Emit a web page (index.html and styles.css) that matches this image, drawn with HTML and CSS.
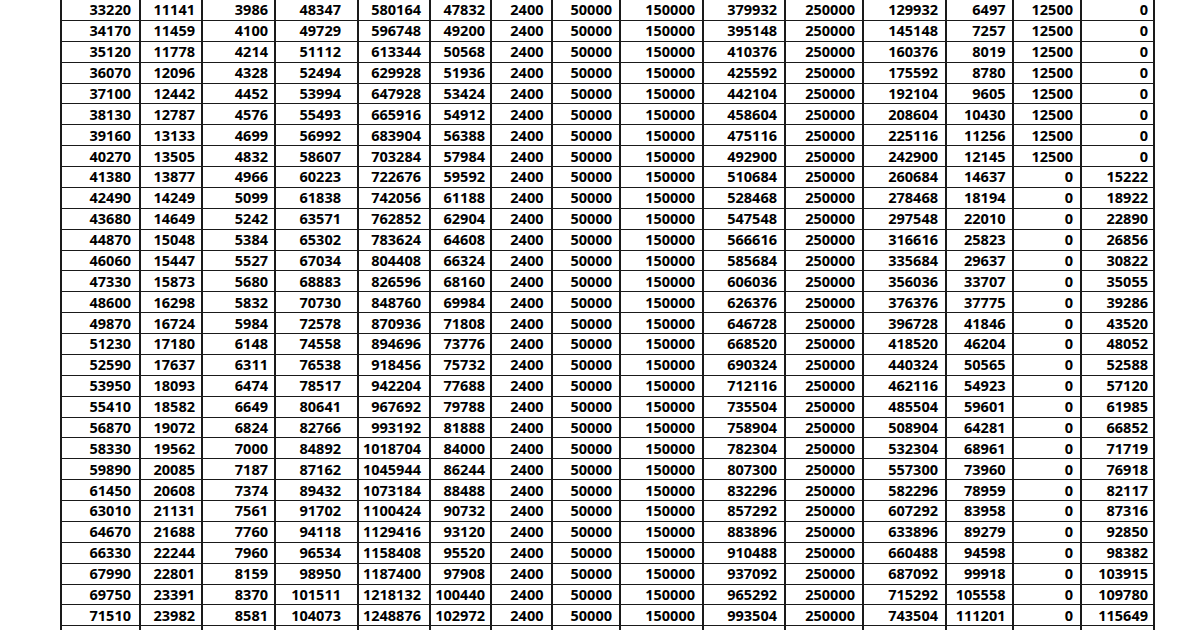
FILE: index.html
```html
<!DOCTYPE html>
<html>
<head>
<meta charset="utf-8">
<link rel="stylesheet" href="styles.css">
</head>
<body>
<table class="sheet">
<colgroup>
<col class="w1"><col class="w2"><col class="w3"><col class="w4"><col class="w5"><col class="w6"><col class="w7"><col class="w8"><col class="w9"><col class="w10"><col class="w11"><col class="w12"><col class="w13"><col class="w14"><col class="w15">
</colgroup>
<tbody>
<tr><td>33220</td><td>11141</td><td>3986</td><td>48347</td><td>580164</td><td>47832</td><td>2400</td><td>50000</td><td>150000</td><td>379932</td><td>250000</td><td>129932</td><td>6497</td><td>12500</td><td>0</td></tr>
<tr><td>34170</td><td>11459</td><td>4100</td><td>49729</td><td>596748</td><td>49200</td><td>2400</td><td>50000</td><td>150000</td><td>395148</td><td>250000</td><td>145148</td><td>7257</td><td>12500</td><td>0</td></tr>
<tr><td>35120</td><td>11778</td><td>4214</td><td>51112</td><td>613344</td><td>50568</td><td>2400</td><td>50000</td><td>150000</td><td>410376</td><td>250000</td><td>160376</td><td>8019</td><td>12500</td><td>0</td></tr>
<tr><td>36070</td><td>12096</td><td>4328</td><td>52494</td><td>629928</td><td>51936</td><td>2400</td><td>50000</td><td>150000</td><td>425592</td><td>250000</td><td>175592</td><td>8780</td><td>12500</td><td>0</td></tr>
<tr><td>37100</td><td>12442</td><td>4452</td><td>53994</td><td>647928</td><td>53424</td><td>2400</td><td>50000</td><td>150000</td><td>442104</td><td>250000</td><td>192104</td><td>9605</td><td>12500</td><td>0</td></tr>
<tr><td>38130</td><td>12787</td><td>4576</td><td>55493</td><td>665916</td><td>54912</td><td>2400</td><td>50000</td><td>150000</td><td>458604</td><td>250000</td><td>208604</td><td>10430</td><td>12500</td><td>0</td></tr>
<tr><td>39160</td><td>13133</td><td>4699</td><td>56992</td><td>683904</td><td>56388</td><td>2400</td><td>50000</td><td>150000</td><td>475116</td><td>250000</td><td>225116</td><td>11256</td><td>12500</td><td>0</td></tr>
<tr><td>40270</td><td>13505</td><td>4832</td><td>58607</td><td>703284</td><td>57984</td><td>2400</td><td>50000</td><td>150000</td><td>492900</td><td>250000</td><td>242900</td><td>12145</td><td>12500</td><td>0</td></tr>
<tr><td>41380</td><td>13877</td><td>4966</td><td>60223</td><td>722676</td><td>59592</td><td>2400</td><td>50000</td><td>150000</td><td>510684</td><td>250000</td><td>260684</td><td>14637</td><td>0</td><td>15222</td></tr>
<tr><td>42490</td><td>14249</td><td>5099</td><td>61838</td><td>742056</td><td>61188</td><td>2400</td><td>50000</td><td>150000</td><td>528468</td><td>250000</td><td>278468</td><td>18194</td><td>0</td><td>18922</td></tr>
<tr><td>43680</td><td>14649</td><td>5242</td><td>63571</td><td>762852</td><td>62904</td><td>2400</td><td>50000</td><td>150000</td><td>547548</td><td>250000</td><td>297548</td><td>22010</td><td>0</td><td>22890</td></tr>
<tr><td>44870</td><td>15048</td><td>5384</td><td>65302</td><td>783624</td><td>64608</td><td>2400</td><td>50000</td><td>150000</td><td>566616</td><td>250000</td><td>316616</td><td>25823</td><td>0</td><td>26856</td></tr>
<tr><td>46060</td><td>15447</td><td>5527</td><td>67034</td><td>804408</td><td>66324</td><td>2400</td><td>50000</td><td>150000</td><td>585684</td><td>250000</td><td>335684</td><td>29637</td><td>0</td><td>30822</td></tr>
<tr><td>47330</td><td>15873</td><td>5680</td><td>68883</td><td>826596</td><td>68160</td><td>2400</td><td>50000</td><td>150000</td><td>606036</td><td>250000</td><td>356036</td><td>33707</td><td>0</td><td>35055</td></tr>
<tr><td>48600</td><td>16298</td><td>5832</td><td>70730</td><td>848760</td><td>69984</td><td>2400</td><td>50000</td><td>150000</td><td>626376</td><td>250000</td><td>376376</td><td>37775</td><td>0</td><td>39286</td></tr>
<tr><td>49870</td><td>16724</td><td>5984</td><td>72578</td><td>870936</td><td>71808</td><td>2400</td><td>50000</td><td>150000</td><td>646728</td><td>250000</td><td>396728</td><td>41846</td><td>0</td><td>43520</td></tr>
<tr><td>51230</td><td>17180</td><td>6148</td><td>74558</td><td>894696</td><td>73776</td><td>2400</td><td>50000</td><td>150000</td><td>668520</td><td>250000</td><td>418520</td><td>46204</td><td>0</td><td>48052</td></tr>
<tr><td>52590</td><td>17637</td><td>6311</td><td>76538</td><td>918456</td><td>75732</td><td>2400</td><td>50000</td><td>150000</td><td>690324</td><td>250000</td><td>440324</td><td>50565</td><td>0</td><td>52588</td></tr>
<tr><td>53950</td><td>18093</td><td>6474</td><td>78517</td><td>942204</td><td>77688</td><td>2400</td><td>50000</td><td>150000</td><td>712116</td><td>250000</td><td>462116</td><td>54923</td><td>0</td><td>57120</td></tr>
<tr><td>55410</td><td>18582</td><td>6649</td><td>80641</td><td>967692</td><td>79788</td><td>2400</td><td>50000</td><td>150000</td><td>735504</td><td>250000</td><td>485504</td><td>59601</td><td>0</td><td>61985</td></tr>
<tr><td>56870</td><td>19072</td><td>6824</td><td>82766</td><td>993192</td><td>81888</td><td>2400</td><td>50000</td><td>150000</td><td>758904</td><td>250000</td><td>508904</td><td>64281</td><td>0</td><td>66852</td></tr>
<tr><td>58330</td><td>19562</td><td>7000</td><td>84892</td><td>1018704</td><td>84000</td><td>2400</td><td>50000</td><td>150000</td><td>782304</td><td>250000</td><td>532304</td><td>68961</td><td>0</td><td>71719</td></tr>
<tr><td>59890</td><td>20085</td><td>7187</td><td>87162</td><td>1045944</td><td>86244</td><td>2400</td><td>50000</td><td>150000</td><td>807300</td><td>250000</td><td>557300</td><td>73960</td><td>0</td><td>76918</td></tr>
<tr><td>61450</td><td>20608</td><td>7374</td><td>89432</td><td>1073184</td><td>88488</td><td>2400</td><td>50000</td><td>150000</td><td>832296</td><td>250000</td><td>582296</td><td>78959</td><td>0</td><td>82117</td></tr>
<tr><td>63010</td><td>21131</td><td>7561</td><td>91702</td><td>1100424</td><td>90732</td><td>2400</td><td>50000</td><td>150000</td><td>857292</td><td>250000</td><td>607292</td><td>83958</td><td>0</td><td>87316</td></tr>
<tr><td>64670</td><td>21688</td><td>7760</td><td>94118</td><td>1129416</td><td>93120</td><td>2400</td><td>50000</td><td>150000</td><td>883896</td><td>250000</td><td>633896</td><td>89279</td><td>0</td><td>92850</td></tr>
<tr><td>66330</td><td>22244</td><td>7960</td><td>96534</td><td>1158408</td><td>95520</td><td>2400</td><td>50000</td><td>150000</td><td>910488</td><td>250000</td><td>660488</td><td>94598</td><td>0</td><td>98382</td></tr>
<tr><td>67990</td><td>22801</td><td>8159</td><td>98950</td><td>1187400</td><td>97908</td><td>2400</td><td>50000</td><td>150000</td><td>937092</td><td>250000</td><td>687092</td><td>99918</td><td>0</td><td>103915</td></tr>
<tr><td>69750</td><td>23391</td><td>8370</td><td>101511</td><td>1218132</td><td>100440</td><td>2400</td><td>50000</td><td>150000</td><td>965292</td><td>250000</td><td>715292</td><td>105558</td><td>0</td><td>109780</td></tr>
<tr><td>71510</td><td>23982</td><td>8581</td><td>104073</td><td>1248876</td><td>102972</td><td>2400</td><td>50000</td><td>150000</td><td>993504</td><td>250000</td><td>743504</td><td>111201</td><td>0</td><td>115649</td></tr>
<tr><td></td><td></td><td></td><td></td><td></td><td></td><td></td><td></td><td></td><td></td><td></td><td></td><td></td><td></td><td></td></tr>
</tbody>
</table>
</body>
</html>
```

FILE: styles.css
```css
html, body {
  margin: 0;
  padding: 0;
  background: #ffffff;
  overflow: hidden;
}

.sheet {
  border-collapse: collapse;
  table-layout: fixed;
  width: 1095px;
  margin: -1px 0 0 59.7px;
  font-family: "Open Sans", "Liberation Sans", sans-serif;
  font-weight: 700;
  font-size: 14.5px;
  color: #000;
}

.w1 { width: 79.3px; }
.w2 { width: 62px; }
.w3 { width: 73.5px; }
.w4 { width: 82.5px; }
.w5 { width: 72px; }
.w6 { width: 61px; }
.w7 { width: 61px; }
.w8 { width: 68px; }
.w9 { width: 83px; }
.w10 { width: 82px; }
.w11 { width: 78px; }
.w12 { width: 83px; }
.w13 { width: 67px; }
.w14 { width: 68px; }
.w15 { width: 73px; }

.sheet tr {
  height: 20.88px;
}

.sheet td {
  border-left: 2px solid #1a1a1a;
  border-right: 2px solid #1a1a1a;
  border-top: 1px solid #1a1a1a;
  border-bottom: 1px solid #1a1a1a;
  padding: 1px 7px 0 0;
  text-align: right;
  line-height: 18px;
  white-space: nowrap;
  overflow: hidden;
  vertical-align: middle;
}

.sheet td:nth-child(1) { padding-right: 8px; }
.sheet td:nth-child(2) { padding-right: 6px; }
.sheet td:nth-child(3) { padding-right: 6.5px; }
.sheet td:nth-child(4) { padding-right: 16px; }
.sheet td:nth-child(5) { padding-right: 8px; }
.sheet td:nth-child(6) { padding-right: 5px; }
.sheet td:nth-child(7) { padding-right: 7.5px; }
.sheet td:nth-child(13) { padding-right: 6.5px; }
.sheet td:nth-child(15) { padding-right: 5px; }
```
